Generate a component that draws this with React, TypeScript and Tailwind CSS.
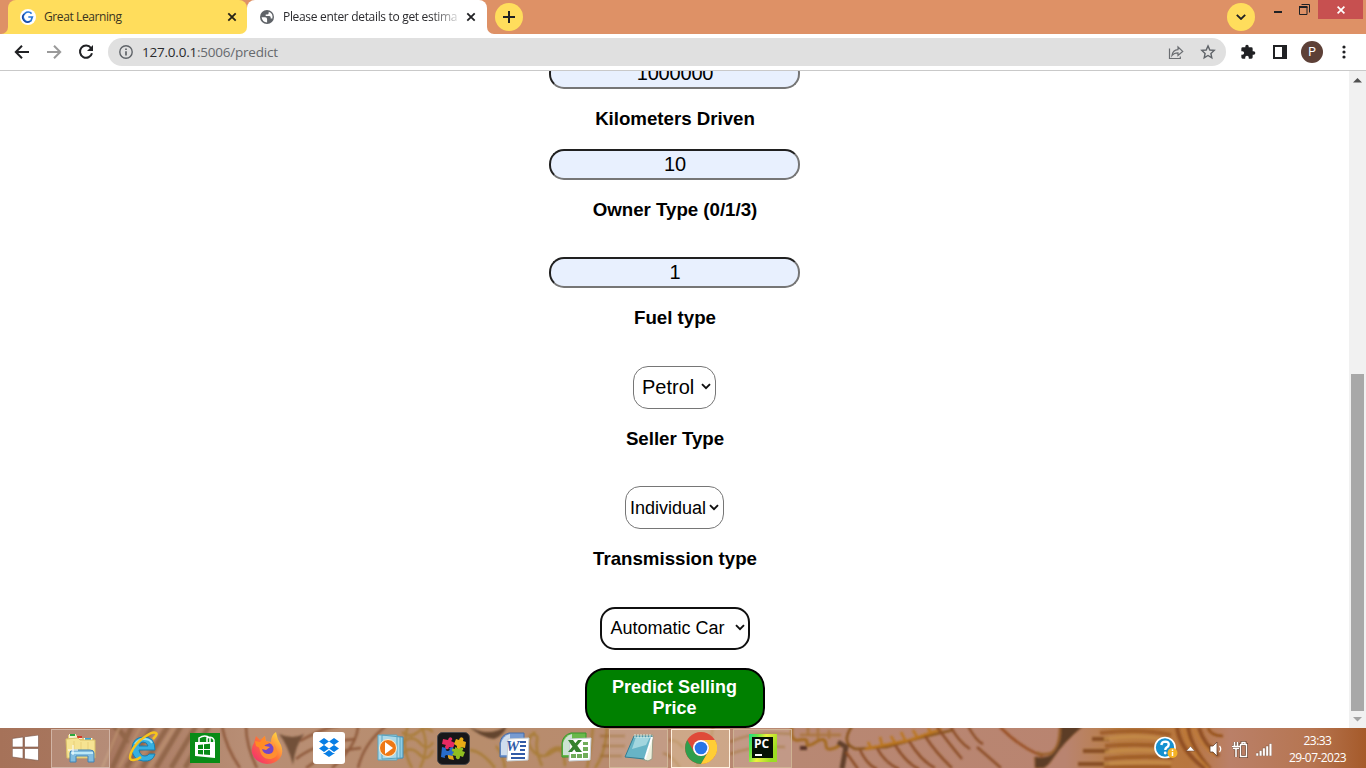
import React from 'react';

const UI = "font-['Open_Sans','Noto_Sans',sans-serif]";

function Close({ className = '' }: { className?: string }) {
  return (
    <svg width="10" height="10" viewBox="0 0 10 10" className={className}>
      <path d="M1.3 1.3l7.4 7.4M8.7 1.3l-7.4 7.4" stroke="currentColor" strokeWidth="1.8" fill="none" />
    </svg>
  );
}

function TabStrip() {
  return (
    <header className="flex h-[34px] shrink-0 bg-[#de9166]">
      <div className="h-[34px] w-[8px] bg-[#ffdd5c]"><div className="h-full w-full rounded-br-[7px] bg-[#de9166]" /></div>
      <div className="h-[34px] w-[239px] bg-[linear-gradient(to_bottom,#de9166_60%,#ffffff_60%)]">
        <div className={`flex h-full w-full items-center rounded-t-[8px] rounded-br-[7px] bg-[#ffdd5c] pl-3 text-[#3a3420] ${UI}`}>
          <svg width="16" height="16" viewBox="0 0 16 16">
            <circle cx="8" cy="8" r="8" fill="#fff" />
            <path d="M11.6 4.600A4.800 4.800 0 1 0 11 11.800L12.300 8H8.300" fill="none" stroke="#2877d8" strokeWidth="1.700" />
            <path d="M4 5a4.800 4.800 0 0 0 6 7.400" fill="none" stroke="#1b46a2" strokeWidth="1.300" />
          </svg>
          <span className="ml-2 w-[183px] whitespace-nowrap text-[12px] tracking-[-0.4px]">Great Learning</span>
          <Close className="text-[#262216]" />
        </div>
      </div>
      <div className="h-[34px] w-[240px] bg-[linear-gradient(to_bottom,#de9166_60%,#ffffff_60%)]">
        <div className={`flex h-full w-full items-center rounded-t-[8px] bg-white pl-3 text-[#2b2b2e] ${UI}`}>
          <svg width="14" height="14" viewBox="0 0 14 14" className="ml-[1px]">
            <circle cx="7" cy="7" r="7" fill="#5f6368" />
            <path d="M1.600 7.200h3.600q1.900 0 1.900 2v3.200q-4.900-.4-5.500-5.200zM8.700 1.800v1.300q0 1.500-1.600 1.500H5.700V6h3.700q1.300 0 1.300 1.500v1h1.700q1-4.900-3.700-6.700z" fill="#fff" />
          </svg>
          <span className="ml-[9px] w-[176px] overflow-hidden whitespace-nowrap text-[12px] tracking-[-0.32px] [mask-image:linear-gradient(to_right,black_148px,transparent_180px)]">
            Please enter details to get estima
          </span>
          <Close className="ml-[7px] text-[#202124]" />
        </div>
      </div>
      <div className="h-[34px] w-[8px] bg-white"><div className="h-full w-full rounded-bl-[7px] bg-[#de9166]" /></div>
      <div className="mt-[3px] flex h-[28px] w-[28px] items-center justify-center rounded-full bg-[#ffdd5c]">
        <svg width="12" height="12" viewBox="0 0 12 12"><path d="M6 0v12M0 6h12" stroke="#202124" strokeWidth="2" /></svg>
      </div>
      <div className="ml-auto mt-[3px] flex h-[28px] w-[28px] items-center justify-center rounded-full bg-[#ffdd5c]">
        <svg width="10" height="6" viewBox="0 0 10 6"><path d="M.8.8L5 5 9.2.8" fill="none" stroke="#202124" strokeWidth="1.8" /></svg>
      </div>
      <div className="ml-[19px] mt-[11px] h-[2px] w-[8px] bg-[#202124]" />
      <svg width="11" height="11" viewBox="0 0 11 11" className="ml-[17px] mt-[4px]">
        <path d="M2.500.5h8v8" fill="none" stroke="#202124" />
        <path d="M.5 3h7.500v7.500H.5z" fill="none" stroke="#202124" />
        <path d="M0 3h8.500" stroke="#202124" strokeWidth="2" />
      </svg>
      <div className="ml-[8px] mr-[3px] flex h-[19px] w-[45px] items-center justify-center bg-[#c75050]">
        <svg width="8" height="8" viewBox="0 0 8 8"><path d="M.6.6l6.800 6.800M7.400.6L.6 7.400" stroke="#fff" strokeWidth="1.700" /></svg>
      </div>
    </header>
  );
}

function Toolbar() {
  return (
    <nav className="flex h-[37px] shrink-0 items-center border-b border-[#c9c9c9] bg-white pl-[14px]">
      <svg width="16" height="16" viewBox="0 0 16 16"><path d="M15 8H2.5M8 1.8L1.8 8 8 14.2" fill="none" stroke="#202124" strokeWidth="2" /></svg>
      <svg width="16" height="16" viewBox="0 0 16 16" className="ml-4"><path d="M1 8h12.500M8 1.800L14.200 8 8 14.200" fill="none" stroke="#9a9a9a" strokeWidth="2" /></svg>
      <svg width="16" height="16" viewBox="0 0 16 16" className="ml-4">
        <path d="M13 4A6.100 6.100 0 1 0 14 9.200" fill="none" stroke="#202124" strokeWidth="2" />
        <path d="M15 1v6H9z" fill="#202124" />
      </svg>
      <div className="ml-[14px] flex h-[28px] w-[1118px] items-center rounded-full bg-[#e0e0e0] pl-[11px]">
        <svg width="14" height="14" viewBox="0 0 14 14">
          <circle cx="7" cy="7" r="6.200" fill="none" stroke="#5f6368" strokeWidth="1.400" />
          <path d="M7 6.200v4.200M7 3.500v1.600" stroke="#5f6368" strokeWidth="1.700" />
        </svg>
        <span className={`ml-[9px] whitespace-nowrap text-[13.5px] tracking-[-0.22px] text-[#66696d] ${UI}`}>
          <span className="text-[#292a2d]">127.0.0.1</span>:5006/predict
        </span>
        <svg width="16" height="15" viewBox="0 0 16 15" className="ml-auto" fill="none" stroke="#6a6d71">
          <path d="M1.500 3.500v10h10.800v-2" strokeWidth="1.200" />
          <path d="M4 10.500c.5-3.700 2.500-5.600 6-5.800V2l4.700 4.400L10 10.500V7.800c-2.600 0-4.500.7-6 2.700z" strokeWidth="1.200" />
        </svg>
        <svg width="16" height="16" viewBox="0 0 16 16" className="ml-4 mr-[10px]" fill="none" stroke="#5f6368">
          <path d="M8 1.900l1.800 4.100 4.400.4-3.300 3 .9 4.400L8 11.500l-3.800 2.300.9-4.400-3.300-3 4.400-.4z" strokeWidth="1.400" />
        </svg>
      </div>
      <svg width="16" height="16" viewBox="0 0 24 24" className="ml-[14px]">
        <path d="M20.500 11H19V7a2 2 0 0 0-2-2h-4V3.500a2.500 2.500 0 0 0-5 0V5H4a2 2 0 0 0-2 2v3.800h1.500a2.700 2.700 0 0 1 0 5.400H2V20a2 2 0 0 0 2 2h3.800v-1.500a2.700 2.700 0 0 1 5.400 0V22H17a2 2 0 0 0 2-2v-4h1.500a2.500 2.500 0 0 0 0-5z" fill="#202124" />
      </svg>
      <svg width="14" height="14" viewBox="0 0 14 14" className="ml-[17px]">
        <path d="M0 0h14v14H0z" fill="#202124" /><path d="M2 2h7v10H2z" fill="#fff" />
      </svg>
      <div className="ml-[14px] flex h-[22px] w-[22px] items-center justify-center rounded-full bg-[#5d4037] font-['Roboto',sans-serif] text-[12px] text-white">P</div>
      <svg width="4" height="14" viewBox="0 0 4 14" className="ml-[19px]" fill="#202124">
        <circle cx="2" cy="2" r="1.600" /><circle cx="2" cy="7" r="1.600" /><circle cx="2" cy="12" r="1.600" />
      </svg>
    </nav>
  );
}

function Field({ value }: { value: string }) {
  return (
    <div className="flex h-[31px] w-[251px] shrink-0 items-center justify-center rounded-[15px] border-2 border-b-[#767676] border-l-[#202020] border-r-[#767676] border-t-[#202020] bg-[#e8f0fe] pb-[2px] pl-px text-[20px] leading-none tracking-[-0.2px]">
      {value}
    </div>
  );
}

function Label({ children, className }: { children: React.ReactNode; className: string }) {
  return <h3 className={`shrink-0 pl-px pt-[19px] text-center text-[18.72px] font-bold leading-[22px] tracking-[-0.02px] ${className}`}>{children}</h3>;
}

function Select({ children, className }: { children: React.ReactNode; className: string }) {
  return (
    <div className={`flex h-[43px] shrink-0 items-center justify-between rounded-[15px] bg-white ${className}`}>
      <span className="whitespace-nowrap leading-none">{children}</span>
      <svg width="10" height="7" viewBox="0 0 10 7"><path d="M1 1.200l4 4 4-4" fill="none" stroke="#101010" strokeWidth="1.900" /></svg>
    </div>
  );
}

function Page() {
  return (
    <main className="flex h-[657px] shrink-0 overflow-hidden bg-white">
      <div className="flex w-[1349px] flex-col items-center overflow-hidden font-['Liberation_Sans',Arial,sans-serif] text-black">
        <div className="-mt-[13px]"><Field value="1000000" /></div>
        <Label className="h-[60px]">Kilometers Driven</Label>
        <Field value="10" />
        <Label className="h-[77px]">Owner Type (0/1/3)</Label>
        <Field value="1" />
        <Label className="h-[78px]">Fuel type</Label>
        <Select className="w-[83px] border border-[#767676] pb-[2px] pl-2 pr-1 text-[20px]">Petrol</Select>
        <Label className="h-[77px]">Seller Type</Label>
        <Select className="w-[99px] border border-[#767676] pl-1 pr-1 text-[18px]">Individual</Select>
        <Label className="h-[78px]">Transmission type</Label>
        <Select className="w-[150px] border-2 border-[#101010] pb-[2px] pl-[9px] pr-[3px] text-[18px]">Automatic Car</Select>
        <button className="mt-[18px] h-[60px] w-[180px] shrink-0 rounded-[20px] border-2 border-black bg-[#008000] px-4 text-[18px] font-bold leading-[21px] text-white">
          Predict Selling Price
        </button>
      </div>
      <div className="flex w-[17px] flex-col items-center bg-[#f1f1f1]">
        <svg width="9" height="5" viewBox="0 0 9 5" className="mt-[7px] shrink-0"><path d="M4.500 0L9 4.500H0z" fill="#505050" /></svg>
        <div className="mt-[291px] h-[337px] w-[13px] shrink-0 bg-[#a8a8a8]" />
        <svg width="9" height="5" viewBox="0 0 9 5" className="mt-[6px] shrink-0"><path d="M4.500 4.500L9 0H0z" fill="#a3a3a3" /></svg>
      </div>
    </main>
  );
}

function Wallpaper() {
  return (
    <svg width="1366" height="40" viewBox="0 0 1366 40" className="absolute inset-0" preserveAspectRatio="none">
      <defs>
        <linearGradient id="wood" x1="0" x2="1" y1="0" y2="0">
          <stop offset="0" stopColor="#a67259" /><stop offset=".08" stopColor="#a87860" /><stop offset=".18" stopColor="#b88e75" />
          <stop offset=".35" stopColor="#b88d6c" /><stop offset=".58" stopColor="#b88873" /><stop offset=".78" stopColor="#b98470" />
          <stop offset=".82" stopColor="#ba7d43" /><stop offset=".87" stopColor="#b8763e" /><stop offset=".9" stopColor="#ba8068" /><stop offset=".96" stopColor="#b67551" /><stop offset="1" stopColor="#a55a2a" />
        </linearGradient>
        <filter id="soft" x="-2%" y="-20%" width="104%" height="140%"><feGaussianBlur stdDeviation="1.1" /></filter>
      </defs>
      <path d="M0 0h1366v40H0z" fill="url(#wood)" />
      <g filter="url(#soft)" fill="none" stroke="#8b4b23" strokeWidth="2.500">
        <g stroke="#8a5f40" strokeWidth="5" opacity=".75">
          <path d="M113 -2q12 7 14 17M132 -2l-20 42M153 -2l-27 42M168 -2l-26 42M181 -2l-25 42M196 -2l-25 42M209 -2l-24 42" />
          <path d="M120 -2l-18 42M141 -2l-22 42M161 -2l-27 42M175 -2l-26 42" stroke="#c19670" strokeWidth="2" />
        </g>
        <g stroke="#895334" opacity=".85">
          <path d="M222 -2q4 22 18 42M246 -2q0 20 11 42M300 13q25-14 39-15M296 31q21-17 60-20M306 40q22-17 55-20" />
          <path d="M279 6q14 6 25 0-9 12-11 31-5-20-14-31z" fill="#67462f" stroke="none" />
          <path d="M358 -2q-1 20-26 42M386 -2q-22 17-28 42" />
        </g>
        <g stroke="#a77b31">
          <path d="M402 4q8 7 16 0t15 0M402 15q10-9 18 0t13-1M402 26q8-9 17 0t14-4M408 -2q-8 20 4 42M421 -2q10 20-1 42" opacity=".8" />
          <path d="M468 -2q20 12 39 0-4 10-13 13-12-1-26-13z" fill="#64442f" stroke="none" />
          <path d="M470 22q12 1 25 18M496 18q7 8 9 22M529 8q10-4 8 5t5 25M535 4q-12 9-1 20 8 8 19 0t12 14M545 28q9-12 20-7M593 -2q-2 24-6 42M607 -2q-1 27-12 42" opacity=".85" />
        </g>
        <path d="M600 8h25M602 18h23M600 28h22M669 12q9 0 14 8M663 25q10 3 17 15M713 -2q-2 24-17 42M730 14q23-11 60-8M730 26q26-9 55-7" stroke="#9b692d" opacity=".7" />
        <g stroke="#a46b24">
          <path d="M792 -1q-2 15 7 13t8 3 9-1 10 3 16-1" strokeWidth="3" /><path d="M800 7h41M808 -1v8M818 0v14M829 2v9" opacity=".65" />
          <path d="M852 -2q-12 18 4 23l31-2 32-9 34-8" stroke="#8a541f" strokeWidth="2.500" />
          <path d="M838 14l8 5-4 22" stroke="#62402a" strokeWidth="5" />
          <path d="M865 21l45-9 32-11M871 20l-3-6M882 17l-2-8M895 15l-4-7M905 12l-4-8M917 9l-4-7M931 5l-3-5" stroke="#bb761c" />
        </g>
        <path d="M846 24l12 17M860 22q7 15 17 19M877 20q8 15 22 21M895 17q12 19 24 24M909 13q12 20 26 27M925 8q11 17 27 32M937 -1q10 14 25 32M951 -1q7 14 19 22M968 -2q8 15 15 18M977 19l24 21" stroke="#8c4e28" />
        <path d="M1000 -1q22 22 43 29" stroke="#995023" />
        <path d="M1060 -2q0 27-13 28-8 1-10-2M1035 29l3 13" stroke="#99612c" />
        <path d="M1061 -2h22q-20 17-29 31-5 8-10 11h-9v-11q15 2 20-6 7-9 6-25z" fill="#5b3c28" stroke="#87552e" strokeWidth="1" />
        <path d="M1092 11h17M1083 23h26M1078 36h31" strokeWidth="4" stroke="#885022" />
        <g strokeWidth="4">
          <path d="M1100 5q42-5 71 2M1105 18q37-3 68 1M1104 31q39-4 69-1M1104 39h67" stroke="#95511f" opacity=".7" />
          <path d="M1104 11q36-5 61 1M1105 24q33-4 67 0M1104 36q34-3 67-1" stroke="#c68d48" strokeWidth="3" opacity=".85" />
          <path d="M1177 -1q3 23 28 42M1188 -1q3 21 22 42M1199 0q5 17 20 28" stroke="#874517" opacity=".8" />
          <path d="M1183 -1q7 25 26 42M1193 -1q7 18 22 29" stroke="#c17b35" strokeWidth="2" />
        </g>
        <path d="M1208 0q3 8 15 8M1210 17l5 8" stroke="#945019" />
        <path d="M800 20h7" stroke="#563322" strokeWidth="4" />
      </g>
    </svg>
  );
}

function Explorer() {
  return <svg width="34" height="32" viewBox="0 0 34 32">
    <path d="M4 3h9l1 3h15v19H4z" fill="#e1c874" /><path d="M5 2h7v4H5z" fill="#f4f0cd" /><path d="M6 2h5v2H6z" fill="#29a83b" />
    <path d="M12 4h6v3h-6z" fill="#f8e6d8" /><path d="M13 4h5v2h-5z" fill="#d33928" /><path d="M20 6h8v3h-8z" fill="#fff" /><path d="M21 6h6v2h-6z" fill="#36a4d2" />
    <path d="M2 7l12-1 2 2h15v18H3z" fill="#f6e392" stroke="#d9bf67" /><path d="M10 9v12M17 10v11M24 10v11" stroke="#e9cf78" />
    <path d="M6 30v-9q0-3 3-3h17q4 0 4 3v9h-6v-6H12v6z" fill="#82bddf" stroke="#4382b3" /><path d="M7 21h22" stroke="#bee9f7" strokeWidth="2" />
    <path d="M9 13v10M4 18h10" stroke="#fff" />
  </svg>;
}

function InternetExplorer() {
  return <svg width="34" height="34" viewBox="0 0 34 34" className="ml-[2px]">
    <path fillRule="evenodd" d="M28 19H12q1 6 6 6 3 0 4-2h6Q26 31 16 30 5 29 5 17 6 6 17 6q11 0 11 13zM12 15h9q-1-4-5-4-3 0-4 4z" fill="#36afe1" stroke="#197eaf" />
    <path d="M8 13q4-5 9-5 6 0 8 4" fill="none" stroke="#97e3f7" strokeWidth="2" />
    <path d="M26 8q5-5 3-6-3-2-10 3Q8 12 4 22q-3 8 3 7 3 0 7-3" fill="none" stroke="#f6c41c" strokeWidth="2.500" />
  </svg>;
}

function Firefox() {
  return <svg width="32" height="32" viewBox="0 0 32 32">
    <defs><linearGradient id="fire" x1="1" y1="0" x2="0" y2="1"><stop stopColor="#ffed43" /><stop offset=".5" stopColor="#ff7139" /><stop offset="1" stopColor="#f2227a" /></linearGradient></defs>
    <path d="M3 11L5 4l4 4 5-4 1 5 5 1q0-7 5-10 1 7 5 13 3 8-1 13-5 6-13 6Q4 31 1 21q-1-6 2-10z" fill="url(#fire)" />
    <circle cx="16" cy="17" r="6.500" fill="#7547c6" /><path d="M8 13q4-2 6 1l5 1-4 3-4-1q1 5 7 5 8-1 5-10 8 12-3 15-11 1-12-14z" fill="#ff8f30" />
    <path d="M4 9l5 1 5-6v5l5 2-5 2-3 4-6-3z" fill="#ff8b25" />
  </svg>;
}

function Wmp() {
  return <svg width="28" height="28" viewBox="0 0 28 28">
    <path d="M8 2l18 1v21l-18 1z" fill="#8ccce5" stroke="#438daf" /><path d="M5 1l18 2v21L5 25zM1 1h19v25H1z" fill="#acd9e9" stroke="#5ba4bf" />
    <circle cx="11" cy="14" r="8.500" fill="#ee7815" stroke="#fff0d2" /><path d="M8 8l8 6-8 6z" fill="#fff" />
  </svg>;
}

function Puzzle() {
  return <svg width="33" height="33" viewBox="0 0 33 33">
    <rect x=".5" y=".5" width="32" height="32" rx="5" fill="#171719" stroke="#48484b" />
    <g>
      <path d="M6 7l5 1q1-4 4-2 1 2-1 3l4 2-2 5-4-1q0 3-3 2-2-2 0-4l-4-1z" fill="#e82a62" />
      <path d="M19 7l3 1q1-4 4-2 1 1 0 3l3 1-1 6-4-1q0 3-3 2-2-1-1-3l-3-2z" fill="#e9ad15" />
      <path d="M5 15l4 1q-1 3 2 3 3-1 1-3l4-1v5q4-1 4 2-1 2-4 1l-1 4-4-1q1-3-2-3-2 1-1 3l-4-1z" fill="#276cca" />
      <path d="M18 15l4 2q2-3 4-1 1 2-1 3l3 1-2 5-3-1q0 4-3 3-2-1-1-3l-4-1 2-3q-3-1-2-3 1-1 3 0z" fill="#90be20" />
      <path d="M11 23l5 1 1 4-5-1-1-2z" fill="#e3a517" />
    </g>
  </svg>;
}

function Office({ kind }: { kind: 'word' | 'excel' }) {
  const word = kind === 'word';
  const c = word ? '#315ba7' : '#36822f';
  return <svg width="32" height="32" viewBox="0 0 32 32">
    <path d="M2 25V11Q3 3 11 1h15v24z" fill={word ? '#779bd1' : '#69b84b'} stroke={word ? '#476da9' : '#37972c'} />
    <path d="M3 23V11q2-7 9-9v21z" fill="#e5edf5" opacity=".8" />
    <path d="M10 7l21-1-1 22-21 1z" fill="#fff" stroke="#c9d0d6" />
    {word ? <>
      <path d="M22 10h6M22 14h6M22 18h5M13 22h14M13 26h14" stroke={c} strokeWidth="2" />
      <text x="8" y="19" fontFamily="Liberation Serif" fontSize="15" fontStyle="italic" fontWeight="bold" fill={c}>W</text>
    </> : <>
      <path d="M23 10h5v3h-5zM23 15h5v4h-5zM11 22h5v4h-5zM17 22h5v4h-5zM23 21h5v5h-5z" fill="#70ad59" />
      <path d="M8 8h5l9 12h-6zM18 8h4L12 20H8z" fill={c} />
    </>}
  </svg>;
}

function Notepad() {
  return <svg width="32" height="32" viewBox="0 0 32 32">
    <path d="M12 3h18l-1 24-4 2-18-5z" fill="#edf1df" stroke="#9a9c87" />
    <path d="M11 4h18l-7 23-20-2z" fill="#67b4c6" stroke="#347c91" /><path d="M13 5h14l-4 8-14 4z" fill="#a3d6df" />
    <path d="M12 2v4M15 2v4M18 2v4M21 2v4M24 2v4M27 2v4" stroke="#e1ece3" />
    <path d="M22 27l7-22" stroke="#fff" strokeWidth="2" />
  </svg>;
}

function Chrome() {
  return <svg width="32" height="32" viewBox="0 0 32 32">
    <circle cx="16" cy="16" r="16" fill="#df4a38" />
    <path d="M2.200 8A16 16 0 0 0 16 32l7-12A8 8 0 0 1 9.100 20z" fill="#2e9e4c" />
    <path d="M30 8A16 16 0 0 1 16 32l7-12a8 8 0 0 0-7-12z" fill="#ffce35" />
    <circle cx="16" cy="16" r="8" fill="#fff" /><circle cx="16" cy="16" r="6.300" fill="#2875e8" />
  </svg>;
}

function PyCharm() {
  return <svg width="28" height="28" viewBox="0 0 28 28">
    <defs><linearGradient id="pc" x1="0" y1="0" x2="1" y2=".4"><stop stopColor="#19d98d" /><stop offset=".28" stopColor="#6be741" /><stop offset=".55" stopColor="#eff23e" /><stop offset="1" stopColor="#9bdd23" /></linearGradient></defs>
    <path d="M0 0h28v28H0z" fill="url(#pc)" /><path d="M3 3h21v21H3z" fill="#071206" />
    <text x="5" y="14" fontFamily="Open Sans" fontSize="12" fontWeight="bold" fill="#fff">PC</text>
    <path d="M6 21h7" stroke="#fff" strokeWidth="2" />
  </svg>;
}

function TaskItem({ children, className = '' }: { children: React.ReactNode; className?: string }) {
  return <div className={`flex h-[40px] w-[60px] shrink-0 items-center justify-center ${className}`}>{children}</div>;
}

function Taskbar() {
  return (
    <footer className="relative h-[40px] shrink-0 overflow-hidden bg-[#b48068]">
      <Wallpaper />
      <div className="relative flex h-[40px] items-center">
        <div className="flex w-[50px] justify-center">
          <svg width="27" height="26" viewBox="0 0 27 26" fill="#fff" stroke="#755344" strokeWidth=".6">
            <path d="M.3 3.500L11 2v10H.3zM12.500 1.800L26.500 0v12h-14zM.3 13.500H11v10L.3 22zM12.500 13.500h14v12L12.500 23.700z" />
          </svg>
        </div>
        <div className="ml-px flex h-[39px] w-[59px] items-center justify-center border border-[#d1b4a5] bg-white/15"><Explorer /></div>
        <TaskItem className="ml-[3px]"><InternetExplorer /></TaskItem>
        <TaskItem className="ml-[2px]">
          <svg width="30" height="30" viewBox="0 0 30 30">
            <path d="M0 0h30v30H0z" fill="#088b16" /><path d="M5 9h20v16L5 23z" fill="#fff" /><path d="M9 10V5q6-4 11 0v5M17 9V5q5-2 7 2v2" fill="none" stroke="#fff" strokeWidth="1.500" />
            <path d="M8 12l5-.5V16H8zM14 11.300l6-.6V16h-6zM8 17h5v4.500L8 21zM14 17h6v5l-6-.4z" fill="#088b16" />
          </svg>
        </TaskItem>
        <TaskItem className="ml-[2px]"><Firefox /></TaskItem>
        <TaskItem className="ml-[2px]">
          <div className="flex h-[32px] w-[32px] items-center justify-center rounded-[3px] bg-white">
            <svg width="20" height="20" viewBox="0 0 20 20" fill="#087ee5"><path d="M5 0l5 3.500L5 7 0 3.500zM15 0l5 3.500L15 7l-5-3.500zM5 7l5 3.500L5 14 0 10.500zM15 7l5 3.500-5 3.500-5-3.500zM4 15l2 0 4-3 4 3h2l-6 4z" /></svg>
          </div>
        </TaskItem>
        <TaskItem className="ml-[2px]"><Wmp /></TaskItem>
        <TaskItem className="ml-[2px]"><Puzzle /></TaskItem>
        <TaskItem className="ml-px"><Office kind="word" /></TaskItem>
        <TaskItem className="ml-[2px]"><Office kind="excel" /></TaskItem>
        <div className="ml-[3px] flex h-[39px] w-[59px] shrink-0 items-center justify-center border border-[#d1b798] bg-white/15"><Notepad /></div>
        <div className="ml-[3px] flex h-[39px] w-[59px] shrink-0 items-center justify-center border border-[#fff1df] bg-[#e1c6a0]/50"><Chrome /></div>
        <div className="ml-[3px] flex h-[39px] w-[59px] shrink-0 items-center justify-center border border-[#cfb394] bg-white/15"><PyCharm /></div>
        <div className="ml-auto flex items-center">
          <svg width="24" height="24" viewBox="0 0 24 24">
            <circle cx="11" cy="11.500" r="10" fill="#1591d0" stroke="#fff" strokeWidth="1.700" />
            <path d="M7.300 9q.5-3.400 4-3.400 3.700.1 3.400 3-.1 2-2.200 3-1.200.7-1.200 2.500" fill="none" stroke="#fff" strokeWidth="2.400" /><circle cx="11.200" cy="17" r="1.400" fill="#fff" />
            <circle cx="18.500" cy="17" r="5" fill="#f4b326" /><path d="M18.500 16v4M18.500 13.500v1.500" stroke="#fff" strokeWidth="1.500" />
          </svg>
          <svg width="9" height="6" viewBox="0 0 9 6" className="ml-[8px] mt-[2px]"><path d="M4.500.3L8.700 5H.3z" fill="#fff" stroke="#674032" strokeWidth=".5" /></svg>
          <svg width="14" height="16" viewBox="0 0 14 16" className="ml-[14px] mt-[2px]">
            <path d="M1 5h3l4-4v14l-4-4H1z" fill="#fff" stroke="#67432f" strokeWidth=".8" /><path d="M10.500 5q2.500 3 0 6" fill="none" stroke="#fff" strokeWidth="1.200" />
          </svg>
          <svg width="16" height="17" viewBox="0 0 16 17" className="ml-[9px] mt-[2px]" fill="none">
            <path d="M2.500 1v4M5.500 1v4M0 5.500h8M1 7.500h6M4 7v9M8.500 3.500h6v12h-6zM10 1.500h3v2h-3z" stroke="#67432f" strokeWidth="2.800" />
            <path d="M2.500 1v4M5.500 1v4M0 5.500h8M1 7.500h6M4 7v9" stroke="#fff" strokeWidth="1.600" />
            <path d="M8.500 3.500h6v12h-6zM10 1.500h3v2h-3z" stroke="#fff" strokeWidth="1.400" />
          </svg>
          <svg width="16" height="13" viewBox="0 0 16 13" className="ml-2 mt-[2px]" fill="#fff" stroke="#69442e" strokeWidth=".4">
            <path d="M0 10h2.600v3H0zM3.300 7.500h2.600V13H3.300zM6.600 5h2.600v8H6.600zM9.900 3h2.600v10H9.900zM13.200.5h2.600V13h-2.600z" />
          </svg>
          <div className={`ml-[9px] mr-[12px] w-[73px] pt-px text-center text-[12px] leading-[17px] tracking-[-0.55px] text-white ${UI}`}>
            <div>23:33</div><div>29-07-2023</div>
          </div>
        </div>
      </div>
    </footer>
  );
}

export default function App() {
  return (
    <div className="flex h-[768px] w-[1366px] flex-col overflow-hidden bg-white">
      <TabStrip />
      <Toolbar />
      <Page />
      <Taskbar />
    </div>
  );
}
